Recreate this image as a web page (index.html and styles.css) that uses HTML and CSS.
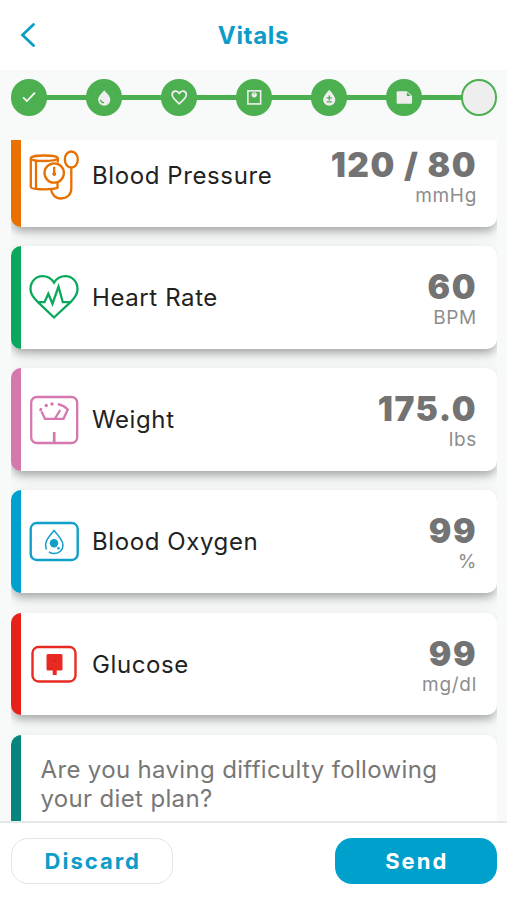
FILE: index.html
```html
<!DOCTYPE html>
<html lang="en">
<head>
    <meta charset="UTF-8">
    <meta name="viewport" content="width=device-width, initial-scale=1.0">
    <title>Vitals</title>
    <link rel="stylesheet" href="styles.css">
</head>
<body>

    <header class="topbar">
        <button class="back" aria-label="Back">
            <svg width="16" height="26" viewBox="0 0 16 26"><path d="M14.500 2.500 3.500 13l11 10.500" fill="none" stroke="#0c9cc8" stroke-width="2.800" stroke-linecap="round"/></svg>
        </button>
        <h1 class="title">Vitals</h1>
    </header>

    <div class="steps">
        <span class="step"><svg viewBox="0 0 36 36"><path d="m12 18.200 3.700 3.600 8-8.300" fill="none" stroke="#fff" stroke-width="1.700"/></svg></span>
        <span class="line"></span>
        <span class="step"><svg viewBox="0 0 36 36"><path d="M18 11c-2.500 3-6 6-6 9.500a6 6 0 0 0 12 0C24 17 20.500 14 18 11z" fill="#eee"/><path d="M14.300 20.500c.3 1.700 1.600 2.800 3.500 2.900" fill="none" stroke="#4caf50" stroke-width="1.200"/></svg></span>
        <span class="line"></span>
        <span class="step"><svg viewBox="0 0 36 36"><path d="M18 24.500c-4-3.500-7-6-7-8.900 0-4.100 5-4.900 7-1.500 2-3.400 7-2.600 7 1.500 0 2.900-3 5.400-7 8.900z" fill="none" stroke="#eee" stroke-width="1.700"/></svg></span>
        <span class="line"></span>
        <span class="step"><svg viewBox="0 0 36 36"><rect x="11.700" y="11.700" width="12.600" height="12.900" fill="none" stroke="#eee" stroke-width="1.600"/><circle cx="18" cy="15.600" r="2.600" fill="#eee"/><path d="M18 13.800v1.500" stroke="#4caf50" stroke-width=".8"/></svg></span>
        <span class="line"></span>
        <span class="step"><svg viewBox="0 0 36 36"><path d="M18 10.500c-2.500 3-6 6.500-6 10a6 6 0 0 0 12 0c0-3.500-3.500-7-6-10z" fill="#eee"/><path d="M15.500 18.700h5M18 16.200v5M15.500 22.500h5" stroke="#4caf50" stroke-width="1.300"/></svg></span>
        <span class="line"></span>
        <span class="step"><svg viewBox="0 0 36 36"><path d="M11.500 12h9l5.200 4.500v7q0 1-1 1H11.500q-1 0-1-1V13q0-1 1-1z" fill="#eee"/><path d="M20.500 13v3.700h4z" fill="#4caf50"/></svg></span>
        <span class="line"></span>
        <span class="step current"></span>
    </div>

    <main class="list">
        <section class="card pressure">
            <svg class="icon" viewBox="0 0 50 50" fill="none" stroke="#e87000" stroke-width="2.300">
                <path d="M28.800 12.500V8.200C28.800 6.500 22.500 5.500 15 5.500S1.800 6.800 1.800 8.500v28.500c0 1.600 6 2.300 13.400 2.300 6 0 11-.4 13.300-1.500v-5"/>
                <path d="M1.800 8.500c0 1.600 6 2.500 13.400 2.500s13.500-1 13.500-2.700M7 10.500v28"/>
                <circle cx="25.200" cy="23" r="9.700"/>
                <path d="M25.200 16.800v7"/><circle cx="25.200" cy="24" r="1.500" fill="#e87000" stroke-width="1"/>
                <ellipse cx="42.300" cy="9.500" rx="6.500" ry="8"/>
                <path d="M42.300 18v20.500c0 6-4.500 10-10.200 10S22.500 44.500 22 39"/>
            </svg>
            <h2 class="name">Blood Pressure</h2>
            <div class="reading"><strong>120 / 80</strong><span>mmHg</span></div>
        </section>

        <section class="card heart">
            <svg class="icon" viewBox="0 0 50 50" fill="none" stroke="#0aa85c" stroke-width="2.300">
                <path d="M9 30.200C4 25.500 1.500 22 1.500 17.200 1.500 9.500 7 4.200 13.500 4.200c5 0 9 2.500 11.500 6.500 2.500-4 6.500-6.500 11.500-6.500 6.500 0 12 5.300 12 13 0 5-3 9-7 13L25 45.500z"/>
                <path d="M8.500 30.200h7l3.800-8.500 4.200 10 6-17 4.300 15.500h7.500"/>
            </svg>
            <h2 class="name">Heart Rate</h2>
            <div class="reading"><strong>60</strong><span>BPM</span></div>
        </section>

        <section class="card weight">
            <svg class="icon" viewBox="0 0 50 50" fill="none" stroke="#d478ae" stroke-width="2.300">
                <rect x="2.200" y="2" width="46" height="46" rx="5.500"/>
                <path d="M25.200 37v11" stroke-width="2.700"/>
                <path d="M12.500 16.500 16 23.800h18.500l4.300-9.300c-2.500-2.500-6-4.500-10-5.300M26 23.500l5.200-8.500"/>
                <path d="M10.500 14.200l2.500.8" stroke-width="3"/>
                <g fill="#d478ae" stroke="none"><circle cx="17.200" cy="10.500" r="1.700"/><circle cx="23" cy="9" r="1.700"/></g>
            </svg>
            <h2 class="name">Weight</h2>
            <div class="reading"><strong>175.0</strong><span>lbs</span></div>
        </section>

        <section class="card oxygen">
            <svg class="icon" viewBox="0 0 50 50" fill="none" stroke="#109fc9" stroke-width="2.400">
                <rect x="1.700" y="6" width="47" height="37" rx="6"/>
                <path d="M17.500 32.500C14.500 25.500 19.500 20 25 13.500c5 5.500 9 10 9 14.500 0 5.500-4 8.500-8.500 8.500-2.200 0-4-.5-5.500-1.700" stroke-width="1.500"/>
                <circle cx="25" cy="26.300" r="4.200" fill="#109fc9" stroke="none"/>
                <circle cx="29.500" cy="31.300" r="1.300" fill="#109fc9" stroke="none"/>
            </svg>
            <h2 class="name">Blood Oxygen</h2>
            <div class="reading"><strong>99</strong><span>%</span></div>
        </section>

        <section class="card glucose">
            <svg class="icon" viewBox="0 0 50 50" fill="none" stroke="#e82a22" stroke-width="2.400">
                <rect x="3.500" y="8" width="43" height="34.500" rx="6"/>
                <path d="M19 15h13q1.500 0 1.500 1.500V30q0 1.500-1.500 1.500h-4.300v4.500h-4v-4.500H19q-1.500 0-1.500-1.500V16.500Q17.500 15 19 15z" fill="#e82a22" stroke="none"/>
                <path d="M24.500 21.500q2-.5 2 1.500M20.500 29.500h3" stroke="#c71f19" stroke-width=".8"/>
            </svg>
            <h2 class="name">Glucose</h2>
            <div class="reading"><strong>99</strong><span>mg/dl</span></div>
        </section>

        <section class="card question">
            <p class="ask">Are you having difficulty following your diet plan?</p>
        </section>
    </main>

    <footer class="actions">
        <button class="btn discard">Discard</button>
        <button class="btn send">Send</button>
    </footer>

</body>
</html>
```
FILE: styles.css
```css
* {
    box-sizing: border-box;
}
body {
    margin: 0;
    height: 900px;
    display: flex;
    flex-direction: column;
    overflow: hidden;
    background: #f7faf9;
    font-family: Inter, "Liberation Sans", sans-serif;
}
button {
    font-family: inherit;
    cursor: pointer;
}
.topbar {
    height: 70px;
    flex: none;
    display: grid;
    grid-template-columns: 60px 1fr 60px;
    align-items: center;
    background: white;
}
.back {
    display: flex;
    padding: 0 0 0 19px;
    border: none;
    background: none;
}
.title {
    margin: 0;
    text-align: center;
    font-size: 24px;
    font-weight: 700;
    letter-spacing: 0.7px;
    color: #0c9cc8;
}
.steps {
    height: 70px;
    flex: none;
    display: flex;
    align-items: center;
    padding: 0 10px 15px 10.5px;
}
.step {
    width: 36.5px;
    height: 36.5px;
    flex: none;
    border-radius: 50%;
    background: #4caf50;
}
.step svg {
    display: block;
}
.current {
    background: #eee;
    border: 2px solid #4caf50;
}
.line {
    flex: 1;
    height: 5px;
    margin: 0 -1px;
    background: #4caf50;
}
.list {
    flex: 1;
    min-height: 0;
    margin: 0 10px 0 11px;
    overflow: hidden;
    display: flex;
    flex-direction: column;
    justify-content: flex-start;
    gap: 19.3px;
}
.card {
    height: 102.9px;
    flex: none;
    display: flex;
    align-items: center;
    padding: 0 20px 0 8px;
    border-left: 10px solid;
    border-radius: 10px;
    background: white;
    box-shadow: 0 6px 9px -2px rgba(0, 0, 0, 0.28), 0 5px 18px rgba(0, 0, 0, 0.09);
}
.pressure {
    margin-top: -16.2px;
    border-color: #ea7000;
}
.heart {
    border-color: #0aa85c;
}
.weight {
    border-color: #d478ae;
}
.oxygen {
    border-color: #00a0cf;
}
.glucose {
    border-color: #e62117;
}
.question {
    border-color: #07857c;
    align-items: flex-start;
}
.icon {
    width: 50px;
    height: 50px;
    flex: none;
}
.name {
    flex: 1;
    margin: 0 0 0 13px;
    font-size: 24px;
    font-weight: 400;
    letter-spacing: 0.6px;
    color: #222;
}
.reading {
    display: flex;
    flex-direction: column;
    align-items: flex-end;
    padding-top: 4px;
    color: #737373;
}
.reading strong {
    font-size: 33.5px;
    font-weight: 900;
    line-height: 36px;
    letter-spacing: 1.500px;
}
.reading span {
    font-size: 19px;
    line-height: 25px;
    letter-spacing: 0.7px;
    color: #8d8d8d;
}
.ask {
    margin: 20px 0 0 11.5px;
    font-size: 24px;
    line-height: 29px;
    letter-spacing: 0.34px;
    color: #777;
}
.actions {
    height: 79px;
    flex: none;
    display: flex;
    justify-content: space-between;
    align-items: flex-start;
    padding: 15px 10px 0 10.5px;
    border-top: 2px solid #e6e8e8;
    background: white;
}
.btn {
    width: 162.5px;
    height: 46px;
    padding: 0 0 0 2px;
    border-radius: 17px;
    font-size: 22px;
    font-weight: 700;
    letter-spacing: 2px;
}
.discard {
    border: 1.5px solid #e2e4e6;
    background: white;
    color: #0c9cc8;
}
.send {
    border: none;
    background: #00a0cd;
    color: white;
}
```
